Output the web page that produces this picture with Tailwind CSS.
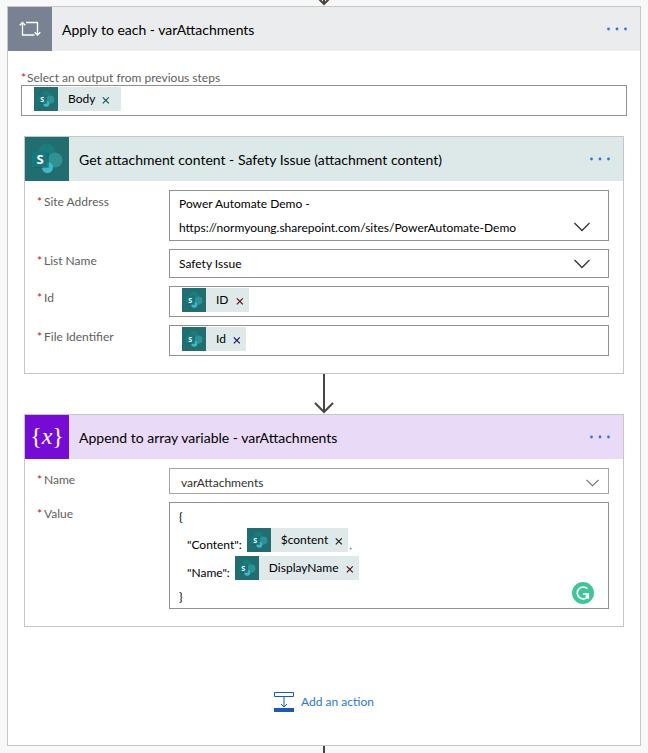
<!DOCTYPE html>
<html lang="en">

<head>
	<meta charset="utf-8" />
	<meta name="viewport" content="width=device-width, initial-scale=1" />
	<title>Apply to each - varAttachments</title>
	<script src="https://cdn.jsdelivr.net/npm/@tailwindcss/browser@4"></script>
</head>

<body class="bg-[#f8f8f8] font-['Lato','Open_Sans',sans-serif] text-[12px] text-black">
	<!-- shared icons -->
	<svg class="hidden">
		<symbol id="sharepoint" viewBox="0 0 44 44">
			<circle cx="22" cy="15" r="8.5" fill="#1d7a7d" />
			<circle cx="30" cy="23" r="7.5" fill="#2f9196" />
			<circle cx="22.500" cy="30.500" r="5.500" fill="#42b8c6" />
			<path d="M9 16h15v15h-15z" fill="#145a5e" opacity=".5" />
			<rect x="7" y="14.500" width="15.500" height="15.500" rx="1" fill="#15787d" />
			<text x="15" y="27" text-anchor="middle" font-family="Open Sans" font-weight="700" font-size="13" fill="#fff">S</text>
		</symbol>
		<symbol id="dots" viewBox="0 0 22 4">
			<circle cx="2.5" cy="2" r="1.4" />
			<circle cx="11" cy="2" r="1.4" />
			<circle cx="19.5" cy="2" r="1.4" />
		</symbol>
		<symbol id="cross" viewBox="0 0 8 8">
			<path d="M.8 1.300l6 6M6.800 1.300l-6 6" fill="none" stroke="currentColor" stroke-width="1.200" />
		</symbol>
		<symbol id="chevron" viewBox="0 0 16 10">
			<path d="M.5 1l7.500 7.500 7.500-7.500" fill="none" stroke="currentColor" stroke-width="1.300" />
		</symbol>
	</svg>

	<div class="flex h-[6px] items-end justify-center overflow-hidden">
		<svg class="h-[12px] w-5 shrink-0 text-[#484644]" viewBox="0 0 20 12" fill="none" stroke="currentColor" stroke-width="2">
			<path d="M10 0v10M1 1l9 9 9-9" />
		</svg>
	</div>

	<main class="mx-[7px] border border-[#c8c6c4] bg-white">
		<header class="flex h-11 items-center bg-[#ebecee] pr-3">
			<div class="flex size-11 items-center justify-center bg-[#788293]">
				<svg class="h-4 w-[22px]" viewBox="0 0 22 16" fill="none" stroke="#fff" stroke-width="1.300">
					<path d="M3.500 1.500v12.500h12M.7 4.300l2.800-2.800 2.800 2.800M7 1.500h11.500v12.500M15.700 11.200l2.800 2.800 2.800-2.800" />
				</svg>
			</div>
			<h1 class="flex-1 pl-[10px] text-[14px]">Apply to each - varAttachments</h1>
			<button type="button" aria-label="Menu for Apply to each"><svg class="h-1 w-[22px] fill-[#2b76dd]"><use href="#dots" /></svg></button>
		</header>

		<div class="px-[13px] pt-5">
			<label for="output" class="flex leading-[14px] text-[#605e5c]"><span class="w-[6px] text-[#c50f1f]">*</span>Select an output from previous steps</label>
			<div class="flex border border-[#919191] pt-px pr-3 pb-1 pl-3">
				<span class="flex h-6 items-center bg-[#dfe9e9] pr-[11px]">
					<svg class="mr-[10px] size-6 bg-[#226d70]"><use href="#sharepoint" /></svg>
					Body
					<button type="button" aria-label="Remove Body" class="ml-[7px] pt-px text-[#0b5a5f]"><svg class="size-2"><use href="#cross" /></svg></button>
				</span>
				<input id="output" type="text" class="min-w-0 flex-1 outline-none" />
			</div>
		</div>

		<div class="mx-4 mt-5">
			<section class="border border-[#c8c6c4]">
				<header class="flex h-11 items-center bg-[#dde9e9] pr-3">
					<svg class="size-11 bg-[#226d70]"><use href="#sharepoint" /></svg>
					<h2 class="flex-1 pl-[10px] text-[14px]">Get attachment content - Safety Issue (attachment content)</h2>
					<button type="button" aria-label="Menu for Get attachment content"><svg class="h-1 w-[22px] fill-[#2b76dd]"><use href="#dots" /></svg></button>
				</header>
				<div class="grid grid-cols-[132px_1fr] gap-y-2 pt-[9px] pr-[14px] pb-[17px] pl-3">
					<label for="site" class="flex leading-6 text-[#605e5c]"><span class="w-[7px] text-[#c50f1f]">*</span>Site Address</label>
					<button id="site" type="button" aria-haspopup="listbox" class="flex items-end justify-between border border-[#919191] pt-px pr-[18px] pl-[9px] text-left leading-6">
						<span>Power Automate Demo -<br />https://normyoung.sharepoint.com/sites/PowerAutomate-Demo</span>
						<svg class="mb-2 h-[10px] w-4 text-[#333]"><use href="#chevron" /></svg>
					</button>

					<label for="list" class="flex leading-6 text-[#605e5c]"><span class="w-[7px] text-[#c50f1f]">*</span>List Name</label>
					<div class="grid items-center border border-[#919191]">
						<select id="list" class="col-start-1 row-start-1 h-[27px] appearance-none pl-[9px] outline-none">
							<option>Safety Issue</option>
						</select>
						<svg class="pointer-events-none col-start-1 row-start-1 mr-[18px] h-[10px] w-4 justify-self-end text-[#333]"><use href="#chevron" /></svg>
					</div>

					<label for="item-id" class="flex leading-6 text-[#605e5c]"><span class="w-[7px] text-[#c50f1f]">*</span>Id</label>
					<div class="flex border border-[#919191] pt-px pr-3 pb-1 pl-3">
						<span class="flex h-6 items-center bg-[#dfe9e9] pr-[5px]">
							<svg class="mr-[10px] size-6 bg-[#226d70]"><use href="#sharepoint" /></svg>
							ID
							<button type="button" aria-label="Remove ID" class="ml-[7px] pt-px text-[#5c0f12]"><svg class="size-2"><use href="#cross" /></svg></button>
						</span>
						<input id="item-id" type="text" class="min-w-0 flex-1 outline-none" />
					</div>

					<label for="file-id" class="flex leading-6 text-[#605e5c]"><span class="w-[7px] text-[#c50f1f]">*</span>File Identifier</label>
					<div class="flex border border-[#919191] pt-px pr-3 pb-1 pl-3">
						<span class="flex h-6 items-center bg-[#dfe9e9] pr-[5px]">
							<svg class="mr-[10px] size-6 bg-[#226d70]"><use href="#sharepoint" /></svg>
							Id
							<button type="button" aria-label="Remove Id" class="ml-[7px] pt-px text-[#1b1464]"><svg class="size-2"><use href="#cross" /></svg></button>
						</span>
						<input id="file-id" type="text" class="min-w-0 flex-1 outline-none" />
					</div>
				</div>
			</section>

			<svg class="mx-auto h-10 w-5 text-[#484644]" viewBox="0 0 20 40" fill="none" stroke="currentColor" stroke-width="2">
				<path d="M10 0v38M1 29l9 9 9-9" />
			</svg>

			<section class="border border-[#c8c6c4]">
				<header class="flex h-11 items-center bg-[#e9daf7] pr-3">
					<div class="flex size-11 items-center justify-center bg-[#770bd6] pb-[2px] font-['Liberation_Serif',serif] text-[24px] leading-6 text-white">{<i>x</i>}</div>
					<h2 class="flex-1 pl-[10px] text-[14px]">Append to array variable - varAttachments</h2>
					<button type="button" aria-label="Menu for Append to array variable"><svg class="h-1 w-[22px] fill-[#2b76dd]"><use href="#dots" /></svg></button>
				</header>
				<div class="grid grid-cols-[132px_1fr] gap-y-2 pt-[9px] pr-[14px] pb-[17px] pl-3">
					<label for="name" class="flex leading-6 text-[#605e5c]"><span class="w-[7px] text-[#c50f1f]">*</span>Name</label>
					<div class="grid items-center border border-[#a6a6a6]">
						<select id="name" class="col-start-1 row-start-1 h-6 appearance-none pt-[3px] pl-[11px] text-[#323130] outline-none">
							<option>varAttachments</option>
						</select>
						<svg class="pointer-events-none col-start-1 row-start-1 mt-1 mr-[9px] h-2 w-[13px] justify-self-end text-[#666]"><use href="#chevron" /></svg>
					</div>

					<span id="value-label" class="flex leading-6 text-[#605e5c]"><span class="w-[7px] text-[#c50f1f]">*</span>Value</span>
					<div class="relative border border-[#919191] px-[9px] leading-[22px]">
						<div role="textbox" aria-multiline="true" aria-labelledby="value-label" contenteditable="true" class="outline-none">
							<div class="pt-[3px]">{</div>
							<div class="flex h-7 items-end pl-2">
								"Content":
								<span class="ml-[5px] flex h-6 items-center self-start bg-[#dfe9e9] pr-[5px]">
									<svg class="mr-[10px] size-6 bg-[#226d70]"><use href="#sharepoint" /></svg>
									$content
									<button type="button" aria-label="Remove $content" class="ml-[7px] pt-px text-[#222]"><svg class="size-2"><use href="#cross" /></svg></button>
								</span>
								<span class="pl-px text-[#3c6e9e]">,</span>
							</div>
							<div class="flex h-7 items-end pl-2">
								"Name":
								<span class="ml-[5px] flex h-6 items-center self-start bg-[#dfe9e9] pr-[5px]">
									<svg class="mr-[10px] size-6 bg-[#226d70]"><use href="#sharepoint" /></svg>
									DisplayName
									<button type="button" aria-label="Remove DisplayName" class="ml-[7px] pt-px text-[#4a1018]"><svg class="size-2"><use href="#cross" /></svg></button>
								</span>
							</div>
							<div class="pt-[2px]">}</div>
						</div>
						<button type="button" aria-label="Check grammar" class="absolute right-[14px] bottom-1">
							<svg class="size-[22px]" viewBox="0 0 22 22" fill="none">
								<circle cx="11" cy="11" r="11" fill="#42c49a" />
								<path d="M15.500 6.700a6 6 0 1 0 .4 8.100M11 12h5.300v4.800M16.200 12l-2.500 3" stroke="#fff" stroke-width="1.600" />
							</svg>
						</button>
					</div>
				</div>
			</section>
		</div>

		<div class="flex justify-center pt-[65px] pb-[33px]">
			<button type="button" class="flex items-center gap-[7px] text-[#2b76dd]">
				<svg class="h-5 w-5" viewBox="0 0 20 20" fill="none" stroke="#1b5cb0">
					<path d="M.5 .5h19v4h-19zM10 5v10M7 12l3 3 3-3" />
					<rect y="16" width="20" height="4" fill="#1b5cb0" stroke="none" />
				</svg>
				Add an action
			</button>
		</div>
	</main>

	<div class="mx-auto h-[7px] w-[2px] bg-[#484644]"></div>
</body>

</html>
